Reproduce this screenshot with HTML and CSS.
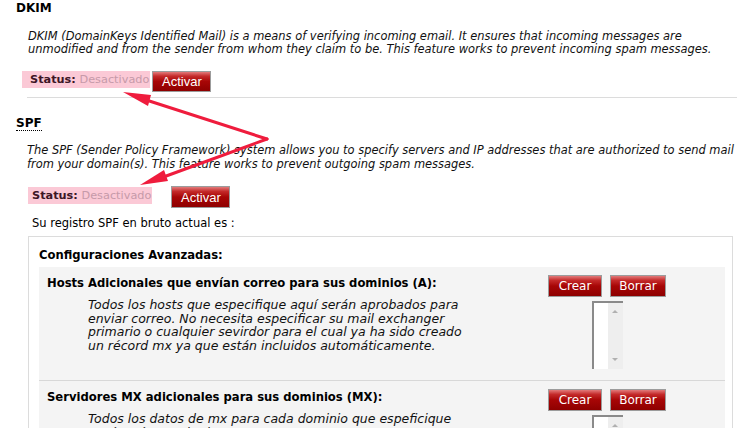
FILE: index.html
```html
<!DOCTYPE html>
<html>
<head>
<meta charset="utf-8">
<link rel="stylesheet" href="styles.css">
</head>
<body>
<div class="page">
  <section class="feature">
    <h3 class="title">DKIM</h3>
    <p class="desc desc-dkim">DKIM (DomainKeys Identified Mail) is a means of verifying incoming email. It ensures that incoming messages are<br>unmodified and from the sender from whom they claim to be. This feature works to prevent incoming spam messages.</p>
    <div class="status-row status-row-dkim">
      <span class="status status-dkim"><b>Status:</b> <span class="state">Desactivado</span></span>
      <button class="btn btn-activate">Activar</button>
    </div>
  </section>
  <div class="rule"></div>
  <section class="feature">
    <h3 class="title title-spf"><span class="dotted">SPF</span></h3>
    <p class="desc desc-spf">The SPF (Sender Policy Framework) system allows you to specify servers and IP addresses that are authorized to send mail<br>from your domain(s). This feature works to prevent outgoing spam messages.</p>
    <div class="status-row status-row-spf">
      <span class="status status-spf"><b>Status:</b> <span class="state">Desactivado</span></span>
      <button class="btn btn-activate">Activar</button>
    </div>
    <p class="raw">Su registro SPF en bruto actual es :</p>
    <div class="advanced">
      <h4 class="adv-title">Configuraciones Avanzadas:</h4>
      <div class="panel">
        <div class="row">
          <div class="row-text">
            <div class="row-title">Hosts Adicionales que envían correo para sus dominios (A):</div>
            <p class="row-desc">Todos los hosts que especifique aquí serán aprobados para<br>enviar correo. No necesita especificar su mail exchanger<br>primario o cualquier sevirdor para el cual ya ha sido creado<br>un récord mx ya que están incluidos automáticamente.</p>
          </div>
          <div class="row-ctrl">
            <div class="btns"><button class="btn btn-sm btn-crear">Crear</button><button class="btn btn-sm btn-borrar">Borrar</button></div>
            <div class="listbox"><div class="lb-field"></div><div class="lb-scroll"><span class="lb-up"></span><span class="lb-down"></span></div></div>
          </div>
        </div>
        <div class="row row-second">
          <div class="row-text">
            <div class="row-title">Servidores MX adicionales para sus dominios (MX):</div>
            <p class="row-desc">Todos los datos de mx para cada dominio que espeficique<br>aquí serán aprobados.</p>
          </div>
          <div class="row-ctrl">
            <div class="btns"><button class="btn btn-sm btn-crear">Crear</button><button class="btn btn-sm btn-borrar">Borrar</button></div>
            <div class="listbox"><div class="lb-field"></div><div class="lb-scroll"><span class="lb-up"></span><span class="lb-down"></span></div></div>
          </div>
        </div>
      </div>
    </div>
  </section>
  <svg class="arrows" width="742" height="428" viewBox="0 0 742 428">
    <g stroke="#ef1c3d" stroke-width="3" stroke-linecap="round" fill="none">
      <line x1="267" y1="139" x2="140" y2="98"/>
      <line x1="267" y1="139" x2="158" y2="179"/>
    </g>
    <g fill="#ef1c3d">
      <polygon points="123,92 151,95 148,106"/>
      <polygon points="140,185 164,170 168,181"/>
    </g>
  </svg>
</div>
</body>
</html>
```
FILE: styles.css
```css
html, body {
  margin: 0;
  padding: 0;
  background: #fff;
}
body {
  font-family: "DejaVu Sans", Verdana, sans-serif;
  font-size: 11px;
  color: #000;
  overflow: hidden;
}
.page {
  position: relative;
  width: 742px;
  height: 428px;
  overflow: hidden;
}
.title {
  margin: 0;
  padding: 1px 0 0 16px;
  font-size: 12px;
  font-weight: bold;
  line-height: 14px;
}
.title-spf {
  padding-top: 18px;
}
.dotted {
  border-bottom: 1px dotted #000;
}
.desc {
  margin: 0;
  font-style: italic;
  font-size: 11.45px;
  white-space: nowrap;
  color: #111;
}
.desc-dkim {
  padding: 15px 0 0 28px;
  line-height: 13px;
}
.desc-spf {
  padding: 13px 0 0 27px;
  line-height: 14px;
}
.status-row {
  display: flex;
  align-items: flex-start;
}
.status-row-dkim {
  padding: 15px 0 0 22px;
  gap: 2px;
}
.status-row-spf {
  padding: 15px 0 0 28px;
  gap: 19px;
}
.status {
  display: inline-block;
  background: #fbc9d6;
  font-size: 11.3px;
  line-height: 17px;
  height: 17px;
  color: #3d1626;
}
.status-dkim {
  padding: 0 1px 0 8px;
}
.status-spf {
  padding: 0 1px 0 4px;
  margin-top: 1px;
  height: 17px;
  line-height: 17px;
}
.state {
  color: #c69aa9;
}
.btn {
  display: inline-block;
  margin: 0;
  border: 1px solid #9c9c9c;
  background: linear-gradient(#e27b7b 0%, #c42a2a 22%, #a70606 50%, #8e0000 100%);
  color: #fff;
  cursor: pointer;
  padding: 0;
}
.btn-activate {
  width: 59px;
  height: 21px;
  font-family: "Liberation Sans", Arial, sans-serif;
  font-size: 13px;
  line-height: 19px;
}
.status-row-spf .btn-activate {
  width: 59px;
  height: 22px;
}
.rule {
  margin: 5px 5px 0 27px;
  height: 1px;
  background: #dcdcdc;
}
.raw {
  margin: 0;
  padding: 8px 0 0 32px;
  line-height: 14px;
  font-size: 11.5px;
}
.advanced {
  margin: 6px 9px 0 28px;
  border: 1px solid #dcdcdc;
  height: 300px;
}
.adv-title {
  margin: 0;
  padding: 11px 0 0 10px;
  font-size: 11.6px;
  font-weight: bold;
  line-height: 14px;
}
.panel {
  margin: 5px 7px 0 10px;
  background: #f4f4f4;
}
.row {
  display: flex;
  padding: 8px 0 11px 8px;
}
.row-second {
  border-top: 1px solid #d8d8d8;
}
.row-text {
  flex: 1;
}
.row-title {
  margin-top: 1px;
  font-weight: bold;
  font-size: 11.6px;
  line-height: 14px;
}
.row-desc {
  margin: 8px 0 0 41px;
  font-style: italic;
  font-size: 12.5px;
  line-height: 13.6px;
  white-space: nowrap;
  color: #111;
}
.row-ctrl {
  width: 236px;
  display: flex;
  flex-direction: column;
  align-items: center;
}
.btns {
  display: flex;
  gap: 8px;
}
.btn-sm {
  height: 22px;
  font-family: "DejaVu Sans", Verdana, sans-serif;
  font-size: 12px;
  line-height: 20px;
}
.btn-crear { width: 54px; }
.btn-borrar { width: 56px; }
.listbox {
  margin-top: 4px;
  width: 31px;
  height: 68px;
  display: flex;
  box-sizing: border-box;
  border-left: 2px solid #8a8a8a;
  border-top: 2px solid #8a8a8a;
  background: #fff;
}
.lb-field {
  flex: 1;
}
.lb-scroll {
  width: 15px;
  background: #eeeeee;
  position: relative;
}
.lb-up, .lb-down {
  position: absolute;
  left: 4px;
  width: 0;
  height: 0;
  border-left: 3px solid transparent;
  border-right: 3px solid transparent;
}
.lb-up {
  top: 7px;
  border-bottom: 3px solid #b0b0b0;
}
.lb-down {
  bottom: 8px;
  border-top: 3px solid #b0b0b0;
}
.arrows {
  position: absolute;
  left: 0;
  top: 0;
  pointer-events: none;
}
```
